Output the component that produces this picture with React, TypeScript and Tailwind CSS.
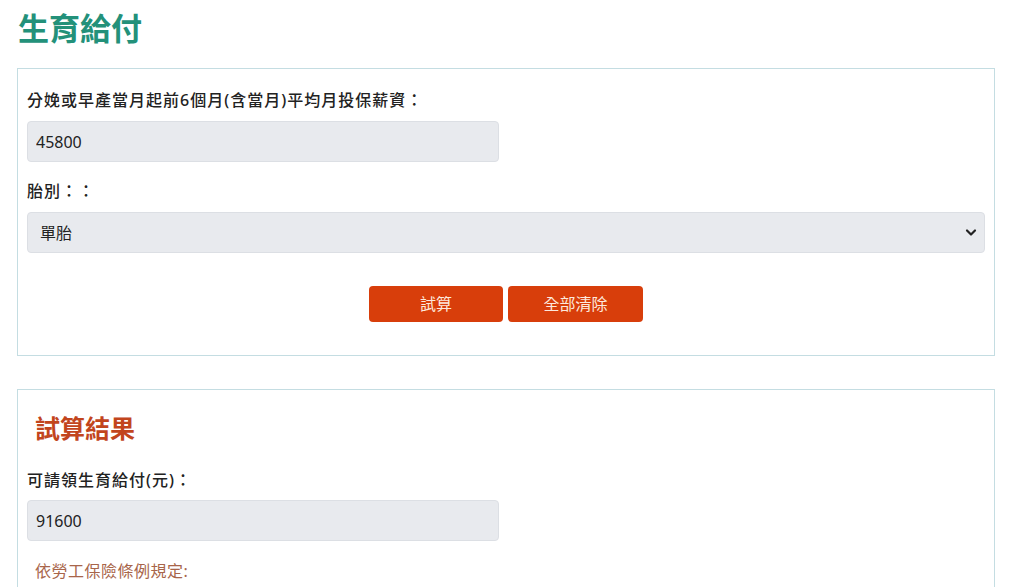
import { useState } from "react";

const fontStack = { fontFamily: '"Noto Sans", "Noto Sans CJK TC", sans-serif' };

export default function App() {
  const [salary, setSalary] = useState("45800");
  const [kind, setKind] = useState("單胎");
  const [result, setResult] = useState("91600");

  const handleCalc = () => {
    const n = parseInt(salary, 10) || 0;
    const mult = kind === "單胎" ? 2 : kind === "雙胞胎" ? 4 : 6;
    setResult(String(n * mult));
  };

  const handleClear = () => {
    setSalary("");
    setKind("單胎");
    setResult("");
  };

  return (
    <div className="min-h-[587px] bg-white pl-[17px] pr-[29px]" style={fontStack}>
      <h1 className="pl-[1px] pt-[7px] pb-[19px] text-[31px] leading-[42px] font-bold text-[#23917a]">
        生育給付
      </h1>

      <div className="border border-[#c4dde2] px-[9px] pt-[20px] pb-[33px]">
        <label className="block text-[16px] leading-[22px] font-medium tracking-[1px] text-[#222]">
          分娩或早產當月起前6個月(含當月)平均月投保薪資：
        </label>
        <input
          value={salary}
          onChange={(e) => setSalary(e.target.value)}
          className="mt-[10px] block h-[41px] w-[472px] rounded-[4px] border border-[#dcdfe4] bg-[#e8eaee] px-[8px] text-[16px] text-[#222] outline-none"
        />

        <label className="mt-[18px] block text-[16px] leading-[22px] font-medium tracking-[1px] text-[#222]">
          胎別：：
        </label>
        <div className="relative mt-[10px]">
          <select
            value={kind}
            onChange={(e) => setKind(e.target.value)}
            className="block h-[41px] w-full appearance-none rounded-[4px] border border-[#dcdfe4] bg-[#e8eaee] px-[12px] text-[16px] text-[#222] outline-none"
          >
            <option>單胎</option>
            <option>雙胞胎</option>
            <option>三胞胎以上</option>
          </select>
          <svg
            className="pointer-events-none absolute right-[8px] top-[16px]"
            width="12"
            height="9"
            viewBox="0 0 12 9"
          >
            <path d="M2 2.5 L6 6.5 L10 2.5" fill="none" stroke="#222" strokeWidth="2.2" strokeLinecap="round" strokeLinejoin="round" />
          </svg>
        </div>

        <div className="mt-[33px] flex justify-center gap-[5px]">
          <button
            onClick={handleCalc}
            className="h-[36px] w-[134px] rounded-[4px] bg-[#d83e0b] text-[16px] text-[#fde8dc]"
          >
            試算
          </button>
          <button
            onClick={handleClear}
            className="h-[36px] w-[135px] rounded-[4px] bg-[#d83e0b] text-[16px] text-[#fde8dc]"
          >
            全部清除
          </button>
        </div>
      </div>

      <div className="mt-[33px] border border-[#c4dde2] px-[9px] pt-[20px] pb-[20px]">
        <h2 className="pl-[8px] text-[25px] leading-[36px] font-bold text-[#c2451d]">試算結果</h2>
        <label className="mt-[23px] block text-[16px] leading-[22px] font-medium tracking-[1px] text-[#222]">
          可請領生育給付(元)：
        </label>
        <input
          value={result}
          readOnly
          className="mt-[9px] block h-[41px] w-[472px] rounded-[4px] border border-[#dcdfe4] bg-[#e8eaee] px-[8px] text-[16px] text-[#222] outline-none"
        />
        <p className="mt-[19px] pl-[8px] text-[16px] leading-[22px] tracking-[0.5px] text-[#a8654a]">
          依勞工保險條例規定:
        </p>
      </div>
    </div>
  );
}
